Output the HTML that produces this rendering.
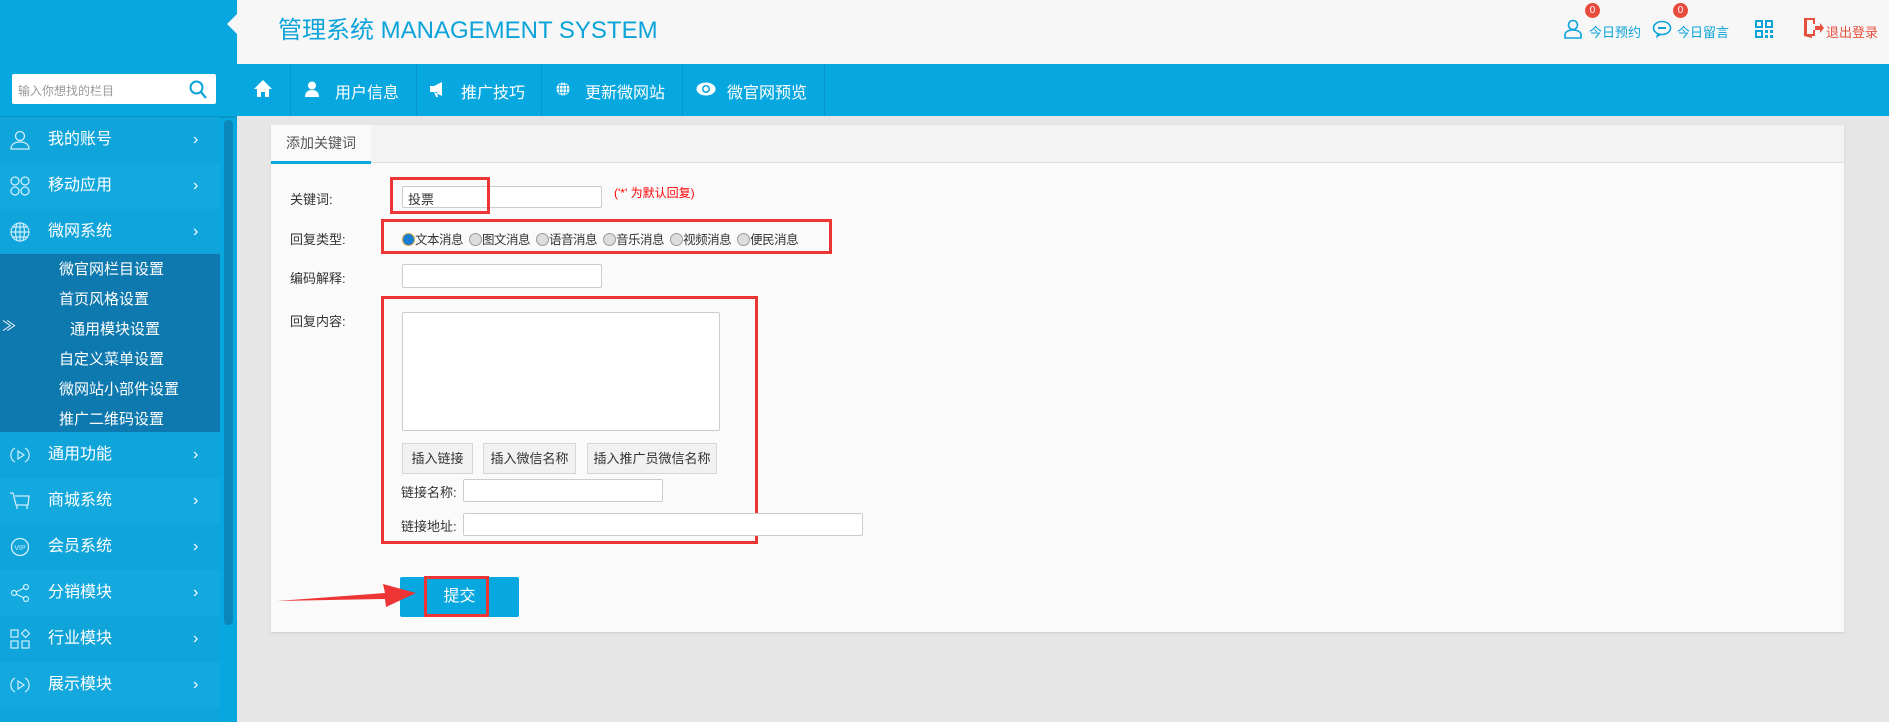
<!DOCTYPE html>
<html style="overflow:hidden;width:1889px;height:722px"><head><meta charset="utf-8"><style>
*{margin:0;padding:0;box-sizing:border-box}
body{width:1889px;height:722px;overflow:hidden;background:#e6e6e6;font-family:"Liberation Sans","Noto Sans CJK SC",sans-serif;position:relative}
.abs{position:absolute}
#hdr{left:0;top:0;width:1889px;height:64px;background:#f7f7f7}
#logo{left:0;top:0;width:237px;height:64px;background:#07a7df}
#notch{left:227px;top:14px;width:0;height:0;border-top:10px solid transparent;border-bottom:10px solid transparent;border-right:10px solid #f7f7f7}
#title{left:278px;top:10px;font-size:24px;color:#0ba3da;white-space:nowrap}
.tr{top:18px;font-size:13px;color:#0ba3da;white-space:nowrap}
.badge{width:15px;height:15px;border-radius:50%;background:#e74c3c;color:#fff;font-size:10px;text-align:center;line-height:15px;top:3px}
#nav{left:0;top:64px;width:1889px;height:52px;background:#07a7df}
#search{left:12px;top:74px;width:204px;height:30px;background:#fff;border-radius:2px;font-size:12px;color:#999;padding:8px 6px}
.sep{top:64px;width:1px;height:52px;background:#0697ca}
.ni{top:79px;color:#fff;font-size:16px;white-space:nowrap}
#side{left:0;top:116px;width:237px;height:606px;background:#07a7df;overflow:hidden}
.mi{left:0;width:220px;height:46px;color:#fff;font-size:16px;line-height:46px}
.mi span{position:absolute;left:48px}
.mi i{position:absolute;left:193px;font-style:normal;font-size:16px}
.mi svg{position:absolute;left:10px;top:13px}
#sub{left:0;top:254px;width:220px;height:178px;background:#0e79ae}
.si{color:#fff;font-size:15px;left:59px;white-space:nowrap}
#scroll{left:224px;top:120px;width:9px;height:505px;background:#0a86b8;border-radius:4px}
#panel{left:271px;top:125px;width:1573px;height:507px;background:#fafafa;box-shadow:0 1px 2px #ccc}
#tabbar{left:271px;top:125px;width:1573px;height:38px;background:#f3f3f3;border-bottom:1px solid #ddd}
#tab{left:271px;top:125px;width:100px;height:39px;background:#fafafa;border-bottom:3px solid #07a7df;font-size:14px;color:#555;text-align:center;line-height:36px}
.lb{font-size:13px;color:#333;white-space:nowrap}
.in{background:#fff;border:1px solid #ccc;border-radius:2px}
.btn{background:#f1f1f1;border:1px solid #d6d6d6;font-size:13px;color:#333;text-align:center;line-height:29px;height:31px;top:443px}
.red{border:3px solid #ee3535}
.radio{display:inline-block;width:13px;height:13px;border-radius:50%;border:1px solid #999;background:#ddd;vertical-align:-2px;margin-right:0}
.rg{margin-right:6px;letter-spacing:-0.5px}
</style></head><body>
<div id="hdr" class="abs"></div>
<div id="logo" class="abs"></div>
<div id="notch" class="abs"></div>
<div id="title" class="abs">管理系统 MANAGEMENT SYSTEM</div>
<svg class="abs" style="left:1563px;top:19px" width="20" height="20" viewBox="0 0 20 20"><circle cx="10" cy="6" r="4.5" fill="none" stroke="#0ba3da" stroke-width="1.6"/><path d="M2 19v-3c0-3 3-5 8-5s8 2 8 5v3z" fill="none" stroke="#0ba3da" stroke-width="1.6"/></svg>
<div class="abs tr" style="left:1589px;top:22px">今日预约</div>
<div class="abs badge" style="left:1585px">0</div>
<svg class="abs" style="left:1652px;top:20px" width="20" height="18" viewBox="0 0 20 18"><ellipse cx="10" cy="8" rx="8.5" ry="6.5" fill="none" stroke="#0ba3da" stroke-width="1.6"/><path d="M5 14l-1 4 5-3" fill="#0ba3da"/><rect x="6" y="7" width="8" height="2" fill="#0ba3da"/></svg>
<div class="abs tr" style="left:1677px;top:22px">今日留言</div>
<div class="abs badge" style="left:1673px">0</div>
<svg class="abs" style="left:1755px;top:20px" width="18" height="18" viewBox="0 0 18 18" fill="#0ba3da"><path d="M0 0h8v8H0zM2 2v4h4V2zM10 0h8v8h-8zM12 2v4h4V2zM0 10h8v8H0zM2 12v4h4v-4zM10 10h3v3h-3zM15 10h3v3h-3zM10 15h3v3h-3zM15 15h3v3h-3z"/></svg>
<svg class="abs" style="left:1804px;top:18px" width="20" height="20" viewBox="0 0 20 20"><path d="M0 0h11v6H9V2H3v14l6 0v-4h2v6H8v2L0 18z" fill="#e8503e"/><path d="M11 8h5V5l4 5-4 5v-3h-5z" fill="#e8503e"/></svg>
<div class="abs tr" style="left:1826px;top:22px;color:#e8503e">退出登录</div>

<div id="nav" class="abs"></div>
<div id="search" class="abs">输入你想找的栏目</div>
<svg class="abs" style="left:189px;top:80px" width="18" height="19" viewBox="0 0 18 19"><circle cx="7.5" cy="7.5" r="6" fill="none" stroke="#0ba3da" stroke-width="2"/><path d="M12 12l5 6" stroke="#0ba3da" stroke-width="2.2"/></svg>
<svg class="abs" style="left:254px;top:80px" width="18" height="17" viewBox="0 0 18 17"><path d="M9 0L0 9h3v8h4v-5h4v5h4V9h3z" fill="#fff"/></svg>
<div class="abs sep" style="left:290px"></div><div class="abs sep" style="left:416px"></div><div class="abs sep" style="left:541px"></div><div class="abs sep" style="left:682px"></div><div class="abs sep" style="left:824px"></div>
<svg class="abs" style="left:305px;top:81px" width="14" height="16" viewBox="0 0 14 16"><circle cx="7" cy="4.5" r="4" fill="#fff"/><path d="M0 16c0-5 3-7 7-7s7 2 7 7z" fill="#fff"/></svg>
<div class="abs ni" style="left:335px">用户信息</div>
<svg class="abs" style="left:430px;top:82px" width="16" height="15" viewBox="0 0 16 15"><path d="M0 4h4l8-4v14l-8-4H0zM4 10l2 5h2l-1-5z" fill="#fff"/></svg>
<div class="abs ni" style="left:461px">推广技巧</div>
<svg class="abs" style="left:556px;top:82px" width="14" height="14" viewBox="0 0 14 14"><circle cx="7" cy="7" r="6.5" fill="#fff"/><path d="M7 0v14M0 7h14M2 3.5h10M2 10.5h10M4.5 1Q2 7 4.5 13M9.5 1Q12 7 9.5 13" stroke="#07a7df" stroke-width=".8" fill="none"/></svg>
<div class="abs ni" style="left:585px">更新微网站</div>
<svg class="abs" style="left:696px;top:82px" width="20" height="14" viewBox="0 0 20 14"><ellipse cx="10" cy="7" rx="9.5" ry="6.5" fill="#fff"/><circle cx="10" cy="7" r="4" fill="#07a7df"/><circle cx="10" cy="7" r="2.5" fill="#fff"/></svg>
<div class="abs ni" style="left:727px">微官网预览</div>

<div id="side" class="abs">
<div class="abs" style="left:0;top:0;width:237px;height:2px;background:#0a94c6"></div>
<div class="abs mi" style="top:1px;background:#10a5da"><svg width="20" height="20" viewBox="0 0 20 20" fill="none" stroke="#cfeefa" stroke-width="1.3"><circle cx="10" cy="6" r="4.5"/><path d="M1 19c0-5 4-7 9-7s9 2 9 7z"/></svg><span>我的账号</span><i>›</i></div>
<div class="abs mi" style="top:47px;background:#13a9de"><svg width="20" height="20" viewBox="0 0 20 20" fill="none" stroke="#cfeefa" stroke-width="1.3"><circle cx="5" cy="5" r="4"/><circle cx="15" cy="5" r="4"/><circle cx="5" cy="15" r="4"/><circle cx="15" cy="15" r="4"/></svg><span>移动应用</span><i>›</i></div>
<div class="abs mi" style="top:93px;background:#10a5da"><svg width="20" height="20" viewBox="0 0 20 20" fill="none" stroke="#cfeefa" stroke-width="1.2"><circle cx="10" cy="10" r="9"/><path d="M1 10h18M10 1v18M3 5h14M3 15h14M7 1.5Q4 10 7 18.5M13 1.5Q16 10 13 18.5"/></svg><span>微网系统</span><i>›</i></div>
<div class="abs mi" style="top:316px;background:#10a5da"><svg width="20" height="20" viewBox="0 0 20 20" fill="none" stroke="#cfeefa" stroke-width="1.2"><path d="M5 3a8 8 0 0 0 0 14M15 3a8 8 0 0 1 0 14M8 6l6 4-6 4z"/></svg><span>通用功能</span><i>›</i></div>
<div class="abs mi" style="top:362px;background:#13a9de"><svg width="20" height="20" viewBox="0 0 20 20" fill="none" stroke="#cfeefa" stroke-width="1.3"><path d="M0 2h3l3 12h12l1-9H5M7 14v4M17 14v4"/></svg><span>商城系统</span><i>›</i></div>
<div class="abs mi" style="top:408px;background:#10a5da"><svg width="20" height="20" viewBox="0 0 20 20"><circle cx="10" cy="10" r="8.5" fill="none" stroke="#cfeefa" stroke-width="1.3"/><text x="10" y="13" font-size="7" fill="#cfeefa" text-anchor="middle" font-family="Liberation Sans">VIP</text></svg><span>会员系统</span><i>›</i></div>
<div class="abs mi" style="top:454px;background:#13a9de"><svg width="20" height="20" viewBox="0 0 20 20" fill="none" stroke="#cfeefa" stroke-width="1.2"><circle cx="4" cy="10" r="2.5"/><circle cx="16" cy="4" r="2.5"/><circle cx="16" cy="16" r="2.5"/><path d="M6 9l8-4M6 11l8 4"/></svg><span>分销模块</span><i>›</i></div>
<div class="abs mi" style="top:500px;background:#10a5da"><svg width="20" height="20" viewBox="0 0 20 20" fill="none" stroke="#cfeefa" stroke-width="1.2"><rect x="1" y="1" width="7" height="7"/><rect x="1" y="12" width="7" height="7"/><rect x="12" y="12" width="7" height="7"/><path d="M15.5 0.5l4 4-4 4-4-4z"/></svg><span>行业模块</span><i>›</i></div>
<div class="abs mi" style="top:546px;background:#13a9de"><svg width="20" height="20" viewBox="0 0 20 20" fill="none" stroke="#cfeefa" stroke-width="1.2"><path d="M5 3a8 8 0 0 0 0 14M15 3a8 8 0 0 1 0 14M8 6l6 4-6 4z"/></svg><span>展示模块</span><i>›</i></div>
<div class="abs mi" style="top:592px;background:#10a5da;height:14px"></div>
</div>
<div id="sub" class="abs"></div>
<div class="abs si" style="top:258px">微官网栏目设置</div>
<div class="abs si" style="top:288px">首页风格设置</div>
<div class="abs si" style="top:318px;left:70px">通用模块设置</div>
<div class="abs si" style="top:316px;left:2px;font-size:14px">≫</div>
<div class="abs si" style="top:348px">自定义菜单设置</div>
<div class="abs si" style="top:378px">微网站小部件设置</div>
<div class="abs si" style="top:408px">推广二维码设置</div>
<div id="scroll" class="abs"></div>

<div id="panel" class="abs"></div>
<div id="tabbar" class="abs"></div>
<div id="tab" class="abs">添加关键词</div>
<div class="abs lb" style="left:290px;top:189px">关键词:</div>
<div class="abs in" style="left:402px;top:186px;width:200px;height:22px"></div>
<div class="abs lb" style="left:408px;top:189px">投票</div>
<div class="abs red" style="left:390px;top:177px;width:100px;height:37px"></div>
<div class="abs lb" style="left:614px;top:184px;color:#f00;font-size:12px">('*' 为默认回复)</div>
<div class="abs lb" style="left:290px;top:229px">回复类型:</div>
<div class="abs lb" style="left:402px;top:229px;font-size:12.5px"><span class="radio" style="background:#1a7fd0;border-color:#d9a640"></span><span class="rg">文本消息</span><span class="radio"></span><span class="rg">图文消息</span><span class="radio"></span><span class="rg">语音消息</span><span class="radio"></span><span class="rg">音乐消息</span><span class="radio"></span><span class="rg">视频消息</span><span class="radio"></span><span class="rg">便民消息</span></div>
<div class="abs red" style="left:381px;top:219px;width:451px;height:35px"></div>
<div class="abs lb" style="left:290px;top:268px">编码解释:</div>
<div class="abs in" style="left:402px;top:264px;width:200px;height:24px"></div>
<div class="abs lb" style="left:290px;top:311px">回复内容:</div>
<div class="abs in" style="left:402px;top:312px;width:318px;height:119px"></div>
<div class="abs red" style="left:381px;top:296px;width:377px;height:248px"></div>
<div class="abs btn" style="left:402px;width:71px">插入链接</div>
<div class="abs btn" style="left:483px;width:93px">插入微信名称</div>
<div class="abs btn" style="left:587px;width:130px">插入推广员微信名称</div>
<div class="abs lb" style="left:401px;top:482px">链接名称:</div>
<div class="abs in" style="left:463px;top:479px;width:200px;height:23px"></div>
<div class="abs lb" style="left:401px;top:516px">链接地址:</div>
<div class="abs in" style="left:463px;top:513px;width:400px;height:23px"></div>
<div class="abs" style="left:400px;top:577px;width:119px;height:40px;background:#07a7df;border-radius:2px;color:#fff;font-size:16px;text-align:center;line-height:40px">提交</div>
<div class="abs red" style="left:424px;top:576px;width:65px;height:41px"></div>
<svg class="abs" style="left:275px;top:575px" width="145" height="35" viewBox="0 0 145 35"><path d="M2 26L110 18L108 9L141 18L111 32L110 24Z" fill="#ee3535"/></svg>
</body></html>
